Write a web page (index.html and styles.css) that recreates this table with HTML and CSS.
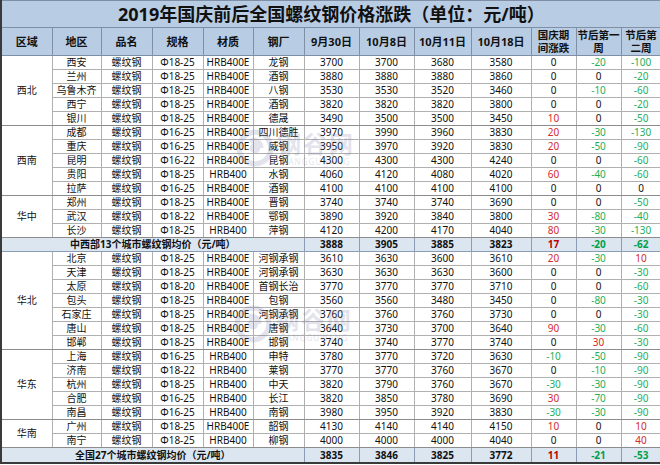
FILE: index.html
```html
<!DOCTYPE html>
<html lang="zh-CN">
<head>
<meta charset="utf-8">
<title>2019年国庆前后全国螺纹钢价格涨跌</title>
<link rel="stylesheet" href="styles.css">
</head>
<body>
<div class="wrap">
<table class="sheet">
<colgroup>
<col style="width:51px"><col style="width:49px"><col style="width:51px"><col style="width:51px"><col style="width:50px"><col style="width:51px"><col style="width:55px"><col style="width:55px"><col style="width:57px"><col style="width:60px"><col style="width:45px"><col style="width:45px"><col style="width:40px">
</colgroup>
<tr class="title"><td colspan="13">2019年国庆前后全国螺纹钢价格涨跌（单位：元/吨）</td></tr>
<tr class="head"><th>区域</th><th>地区</th><th>品名</th><th>规格</th><th>材质</th><th>钢厂</th><th>9月30日</th><th>10月8日</th><th>10月11日</th><th>10月18日</th><th class="sm">国庆期<br>间涨跌</th><th class="sm">节后第一<br>周</th><th class="sm">节后第<br>二周</th></tr>

<tr><td rowspan="5" class="reg">西北</td><td>西安</td><td>螺纹钢</td><td>Φ18-25</td><td>HRB400E</td><td>龙钢</td><td>3700</td><td>3700</td><td>3680</td><td>3580</td><td>0</td><td class="g">-20</td><td class="g">-100</td></tr>
<tr><td>兰州</td><td>螺纹钢</td><td>Φ18-25</td><td>HRB400E</td><td>酒钢</td><td>3880</td><td>3880</td><td>3880</td><td>3860</td><td>0</td><td>0</td><td class="g">-20</td></tr>
<tr><td>乌鲁木齐</td><td>螺纹钢</td><td>Φ18-25</td><td>HRB400E</td><td>八钢</td><td>3530</td><td>3530</td><td>3520</td><td>3460</td><td>0</td><td class="g">-10</td><td class="g">-60</td></tr>
<tr><td>西宁</td><td>螺纹钢</td><td>Φ18-25</td><td>HRB400E</td><td>酒钢</td><td>3820</td><td>3820</td><td>3820</td><td>3800</td><td>0</td><td>0</td><td class="g">-20</td></tr>
<tr class="gend"><td>银川</td><td>螺纹钢</td><td>Φ18-25</td><td>HRB400E</td><td>德晟</td><td>3490</td><td>3500</td><td>3500</td><td>3450</td><td class="r">10</td><td>0</td><td class="g">-50</td></tr>

<tr><td rowspan="5" class="reg">西南</td><td>成都</td><td>螺纹钢</td><td>Φ16-25</td><td>HRB400E</td><td>四川德胜</td><td>3970</td><td>3990</td><td>3960</td><td>3830</td><td class="r">20</td><td class="g">-30</td><td class="g">-130</td></tr>
<tr><td>重庆</td><td>螺纹钢</td><td>Φ16-25</td><td>HRB400E</td><td>威钢</td><td>3950</td><td>3970</td><td>3920</td><td>3830</td><td class="r">20</td><td class="g">-50</td><td class="g">-90</td></tr>
<tr><td>昆明</td><td>螺纹钢</td><td>Φ16-22</td><td>HRB400E</td><td>昆钢</td><td>4300</td><td>4300</td><td>4300</td><td>4240</td><td>0</td><td>0</td><td class="g">-60</td></tr>
<tr><td>贵阳</td><td>螺纹钢</td><td>Φ18-25</td><td>HRB400</td><td>水钢</td><td>4060</td><td>4120</td><td>4080</td><td>4020</td><td class="r">60</td><td class="g">-40</td><td class="g">-60</td></tr>
<tr class="gend"><td>拉萨</td><td>螺纹钢</td><td>Φ16-25</td><td>HRB400E</td><td>酒钢</td><td>4100</td><td>4100</td><td>4100</td><td>4100</td><td>0</td><td>0</td><td>0</td></tr>

<tr><td rowspan="3" class="reg">华中</td><td>郑州</td><td>螺纹钢</td><td>Φ18-25</td><td>HRB400E</td><td>晋钢</td><td>3740</td><td>3740</td><td>3740</td><td>3690</td><td>0</td><td>0</td><td class="g">-50</td></tr>
<tr><td>武汉</td><td>螺纹钢</td><td>Φ18-22</td><td>HRB400E</td><td>鄂钢</td><td>3890</td><td>3920</td><td>3840</td><td>3800</td><td class="r">30</td><td class="g">-80</td><td class="g">-40</td></tr>
<tr class="gend"><td>长沙</td><td>螺纹钢</td><td>Φ18-25</td><td>HRB400</td><td>萍钢</td><td>4120</td><td>4200</td><td>4170</td><td>4040</td><td class="r">80</td><td class="g">-30</td><td class="g">-130</td></tr>

<tr class="avg"><td colspan="6">中西部13个城市螺纹钢均价（元/吨）</td><td>3888</td><td>3905</td><td>3885</td><td>3823</td><td class="rb">17</td><td class="gb">-20</td><td class="gb">-62</td></tr>

<tr><td rowspan="7" class="reg">华北</td><td>北京</td><td>螺纹钢</td><td>Φ18-25</td><td>HRB400E</td><td>河钢承钢</td><td>3610</td><td>3630</td><td>3600</td><td>3610</td><td class="r">20</td><td class="g">-30</td><td class="r">10</td></tr>
<tr><td>天津</td><td>螺纹钢</td><td>Φ18-25</td><td>HRB400E</td><td>河钢承钢</td><td>3630</td><td>3630</td><td>3630</td><td>3600</td><td>0</td><td>0</td><td class="g">-30</td></tr>
<tr><td>太原</td><td>螺纹钢</td><td>Φ18-20</td><td>HRB400E</td><td>首钢长治</td><td>3770</td><td>3770</td><td>3770</td><td>3710</td><td>0</td><td>0</td><td class="g">-60</td></tr>
<tr><td>包头</td><td>螺纹钢</td><td>Φ18-25</td><td>HRB400E</td><td>包钢</td><td>3560</td><td>3560</td><td>3480</td><td>3450</td><td>0</td><td class="g">-80</td><td class="g">-30</td></tr>
<tr><td>石家庄</td><td>螺纹钢</td><td>Φ18-25</td><td>HRB400E</td><td>河钢承钢</td><td>3760</td><td>3760</td><td>3760</td><td>3730</td><td>0</td><td>0</td><td class="g">-30</td></tr>
<tr><td>唐山</td><td>螺纹钢</td><td>Φ18-25</td><td>HRB400E</td><td>唐钢</td><td>3640</td><td>3730</td><td>3700</td><td>3640</td><td class="r">90</td><td class="g">-30</td><td class="g">-60</td></tr>
<tr class="gend"><td>邯郸</td><td>螺纹钢</td><td>Φ18-25</td><td>HRB400E</td><td>邯钢</td><td>3740</td><td>3740</td><td>3770</td><td>3740</td><td>0</td><td class="r">30</td><td class="g">-30</td></tr>

<tr><td rowspan="5" class="reg">华东</td><td>上海</td><td>螺纹钢</td><td>Φ16-25</td><td>HRB400</td><td>申特</td><td>3780</td><td>3770</td><td>3720</td><td>3630</td><td class="g">-10</td><td class="g">-50</td><td class="g">-90</td></tr>
<tr><td>济南</td><td>螺纹钢</td><td>Φ18-22</td><td>HRB400</td><td>莱钢</td><td>3770</td><td>3770</td><td>3760</td><td>3670</td><td>0</td><td class="g">-10</td><td class="g">-90</td></tr>
<tr><td>杭州</td><td>螺纹钢</td><td>Φ18-25</td><td>HRB400</td><td>中天</td><td>3820</td><td>3790</td><td>3760</td><td>3670</td><td class="g">-30</td><td class="g">-30</td><td class="g">-90</td></tr>
<tr><td>合肥</td><td>螺纹钢</td><td>Φ16-25</td><td>HRB400</td><td>长江</td><td>3820</td><td>3850</td><td>3780</td><td>3690</td><td class="r">30</td><td class="g">-70</td><td class="g">-90</td></tr>
<tr class="gend"><td>南昌</td><td>螺纹钢</td><td>Φ16-25</td><td>HRB400</td><td>南钢</td><td>3980</td><td>3950</td><td>3920</td><td>3830</td><td class="g">-30</td><td class="g">-30</td><td class="g">-90</td></tr>

<tr><td rowspan="2" class="reg">华南</td><td>广州</td><td>螺纹钢</td><td>Φ18-25</td><td>HRB400E</td><td>韶钢</td><td>4130</td><td>4140</td><td>4140</td><td>4150</td><td class="r">10</td><td>0</td><td class="r">10</td></tr>
<tr class="gend"><td>南宁</td><td>螺纹钢</td><td>Φ18-25</td><td>HRB400</td><td>柳钢</td><td>4000</td><td>4000</td><td>4000</td><td>4040</td><td>0</td><td>0</td><td class="r">40</td></tr>

<tr class="avg last"><td colspan="6">全国27个城市螺纹钢均价（元/吨）</td><td>3835</td><td>3846</td><td>3825</td><td>3772</td><td class="rb">11</td><td class="gb">-21</td><td class="gb">-53</td></tr>
</table>

<div class="mark mark-1">
<svg class="mark-logo" width="38" height="38" viewBox="0 0 36 36"><circle cx="18" cy="18" r="15" fill="none" stroke="currentColor" stroke-width="5"/><path d="M12 10 A9 9 0 0 1 26 18 L18 18 Z" fill="currentColor"/><circle cx="18" cy="18" r="5" fill="currentColor"/></svg>
<div class="mark-text"><span class="mark-cn">钢谷网</span><span class="mark-en">GANGGUWANG</span></div>
</div>
<div class="mark mark-2">
<svg class="mark-logo" width="38" height="38" viewBox="0 0 36 36"><circle cx="18" cy="18" r="15" fill="none" stroke="currentColor" stroke-width="5"/><path d="M12 10 A9 9 0 0 1 26 18 L18 18 Z" fill="currentColor"/><circle cx="18" cy="18" r="5" fill="currentColor"/></svg>
<div class="mark-text"><span class="mark-cn">钢谷网</span><span class="mark-en">GANGGUWANG</span></div>
</div>
</div>
</body>
</html>
```
FILE: styles.css
```css
html, body {
  margin: 0;
  padding: 0;
  background: #ffffff;
}
body {
  font-family: "Noto Sans", "Noto Sans CJK SC", sans-serif;
  color: #111111;
}
.wrap {
  position: relative;
  width: 660px;
  height: 465px;
  overflow: hidden;
}
.sheet {
  border-collapse: collapse;
  table-layout: fixed;
  width: 660px;
  border-left: 2px solid #3a3a3a;
  border-bottom: 2px solid #3a3a3a;
}
.sheet td, .sheet th {
  border: 1px solid #b0b0b0;
  padding: 0;
  text-align: center;
  vertical-align: middle;
  font-size: 10px;
  line-height: 13px;
  height: 13px;
  white-space: nowrap;
  overflow: hidden;
  font-weight: normal;
}
.sheet .title td {
  height: 26px;
  line-height: 26px;
  background: #b8cce4;
  font-size: 18px;
  font-weight: bold;
  color: #111;
  border-color: #7f8fa6;
}
.sheet .head th {
  height: 27px;
  background: #b8cce4;
  font-size: 11px;
  font-weight: bold;
  border-color: #7f8fa6;
}
.sheet .head th.sm {
  font-size: 10.5px;
  line-height: 13px;
}
.sheet td.reg {
  border-bottom-color: #8c8c8c;
}
.sheet .gend td {
  border-bottom-color: #8c8c8c;
}
.sheet .avg td {
  background: #dce6f1;
  font-weight: bold;
  border-color: #8c9cb4;
}
.sheet .last td {
  height: 14px;
}
.r { color: #d42a2a; }
.g { color: #1fae5b; }
.rb { color: #c00000; font-weight: bold; }
.gb { color: #00a04a; font-weight: bold; }

.mark {
  position: absolute;
  display: flex;
  align-items: center;
  gap: 3px;
  color: #7a78a8;
  opacity: 0.2;
  pointer-events: none;
}
.mark-1 { left: 236px; top: 129px; }
.mark-2 { left: 234px; top: 305px; }
.mark-text {
  display: flex;
  flex-direction: column;
  align-items: center;
  line-height: 1;
}
.mark-cn {
  font-family: "Noto Sans CJK SC", sans-serif;
  font-size: 24px;
  font-weight: bold;
  letter-spacing: 2px;
}
.mark-en {
  font-size: 8px;
  letter-spacing: 1px;
  margin-top: 3px;
}
```
